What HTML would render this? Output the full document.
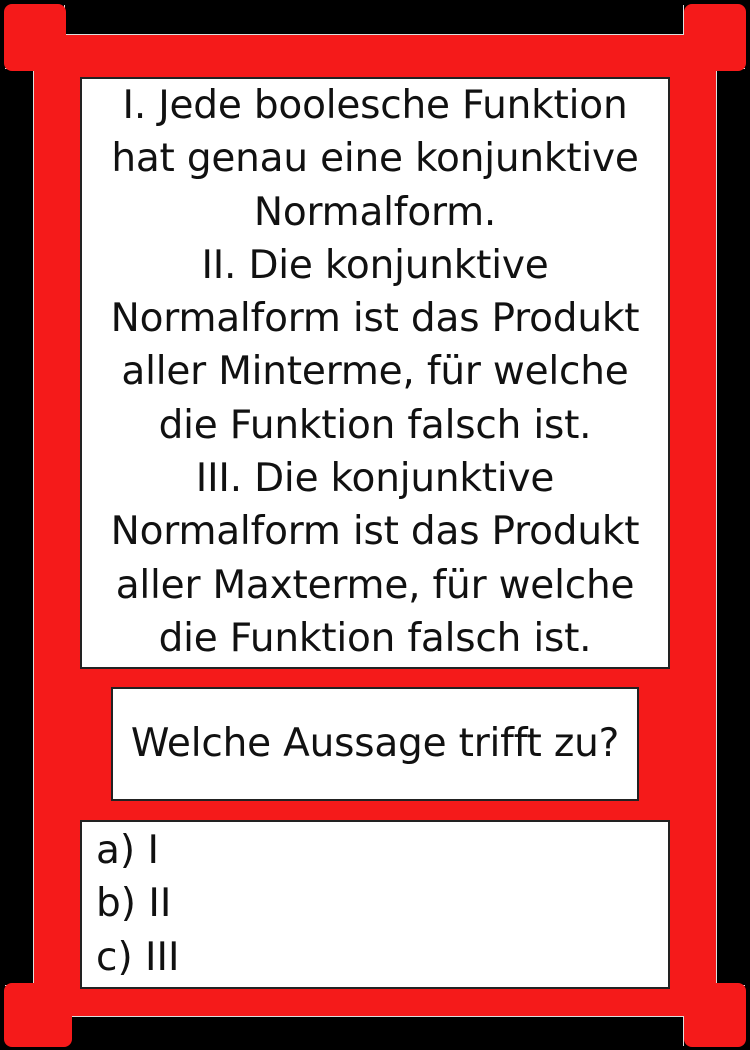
<!DOCTYPE html>
<html><head><style>
html,body{margin:0;padding:0;background:#000;width:750px;height:1050px;overflow:hidden;position:relative;font-family:"DejaVu Sans","Liberation Sans",sans-serif}
div{position:absolute;box-sizing:border-box}
.red{background:#f51a1a}
.bar{background:#000;border:1px solid #ddd}
.box{background:#fff;border:2px solid #222;color:#111;white-space:nowrap}
</style></head><body>
<div class="red" style="left:34px;top:33px;width:683px;height:984px"></div>
<div class="bar" style="left:64px;top:5px;width:620px;height:30px;border-top:none"></div>
<div class="bar" style="left:64px;top:1016px;width:620px;height:30px;border-bottom:none"></div>
<div class="bar" style="left:5px;top:68px;width:29px;height:918px;border-left:none"></div>
<div class="bar" style="left:716px;top:68px;width:29px;height:918px;border-right:none"></div>
<div class="red" style="left:4px;top:4px;width:62px;height:67px;border-radius:8px"></div>
<div class="red" style="left:684px;top:4px;width:62px;height:67px;border-radius:8px"></div>
<div class="red" style="left:4px;top:983px;width:68px;height:64px;border-radius:8px"></div>
<div class="red" style="left:684px;top:983px;width:62px;height:64px;border-radius:8px"></div>
<div class="box" style="left:80px;top:77px;width:590px;height:592px;text-align:center;font-size:39px;line-height:53.3px;padding-top:0px;letter-spacing:-0.2px">I. Jede boolesche Funktion<br>hat genau eine konjunktive<br>Normalform.<br>II. Die konjunktive<br>Normalform ist das Produkt<br>aller Minterme, für welche<br>die Funktion falsch ist.<br>III. Die konjunktive<br>Normalform ist das Produkt<br>aller Maxterme, für welche<br>die Funktion falsch ist.</div>
<div class="box" style="left:111px;top:687px;width:528px;height:114px;text-align:center;font-size:39px;line-height:110px;letter-spacing:-0.2px">Welche Aussage trifft zu?</div>
<div class="box" style="left:80px;top:820px;width:590px;height:169px;font-size:39px;line-height:53.3px;padding-left:14px;padding-top:2px">a) I<br>b) II<br>c) III</div>
</body></html>
